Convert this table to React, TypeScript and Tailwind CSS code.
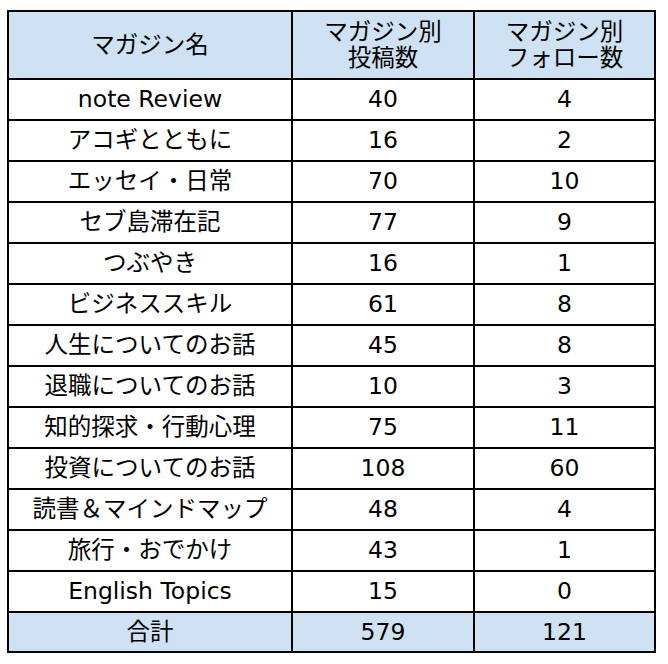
import React from 'react';

interface Row {
  name: string;
  posts: number;
  follows: number;
}

const rows: Row[] = [
  { name: 'note Review', posts: 40, follows: 4 },
  { name: 'アコギとともに', posts: 16, follows: 2 },
  { name: 'エッセイ・日常', posts: 70, follows: 10 },
  { name: 'セブ島滞在記', posts: 77, follows: 9 },
  { name: 'つぶやき', posts: 16, follows: 1 },
  { name: 'ビジネススキル', posts: 61, follows: 8 },
  { name: '人生についてのお話', posts: 45, follows: 8 },
  { name: '退職についてのお話', posts: 10, follows: 3 },
  { name: '知的探求・行動心理', posts: 75, follows: 11 },
  { name: '投資についてのお話', posts: 108, follows: 60 },
  { name: '読書＆マインドマップ', posts: 48, follows: 4 },
  { name: '旅行・おでかけ', posts: 43, follows: 1 },
  { name: 'English Topics', posts: 15, follows: 0 },
];

const cell = 'flex items-center justify-center text-center';

const App: React.FC = () => {
  return (
    <div
      className="w-[668px] h-[664px] bg-white pt-[10px] pl-[7px] text-black text-[23.5px] leading-[27px]"
      style={{ fontFamily: '"DejaVu Sans", "Noto Sans CJK JP", sans-serif' }}
    >
      <div className="grid w-[649px] grid-cols-[282px_180px_179px] grid-rows-[66px_repeat(13,39px)_38px] gap-[2px] bg-black p-[2px]">
        {/* ヘッダー */}
        <div className={`${cell} bg-[#cfe2f3]`}>マガジン名</div>
        <div className={`${cell} bg-[#cfe2f3] flex-col leading-[26px]`}>
          <span>マガジン別</span>
          <span>投稿数</span>
        </div>
        <div className={`${cell} bg-[#cfe2f3] flex-col leading-[26px]`}>
          <span>マガジン別</span>
          <span>フォロー数</span>
        </div>

        {rows.map((row) => (
          <React.Fragment key={row.name}>
            <div className={`${cell} bg-white`}>{row.name}</div>
            <div className={`${cell} bg-white`}>{row.posts}</div>
            <div className={`${cell} bg-white`}>{row.follows}</div>
          </React.Fragment>
        ))}

        {/* 合計 */}
        <div className={`${cell} bg-[#cfe2f3]`}>合計</div>
        <div className={`${cell} bg-[#cfe2f3]`}>579</div>
        <div className={`${cell} bg-[#cfe2f3]`}>121</div>
      </div>
    </div>
  );
};

export default App;
